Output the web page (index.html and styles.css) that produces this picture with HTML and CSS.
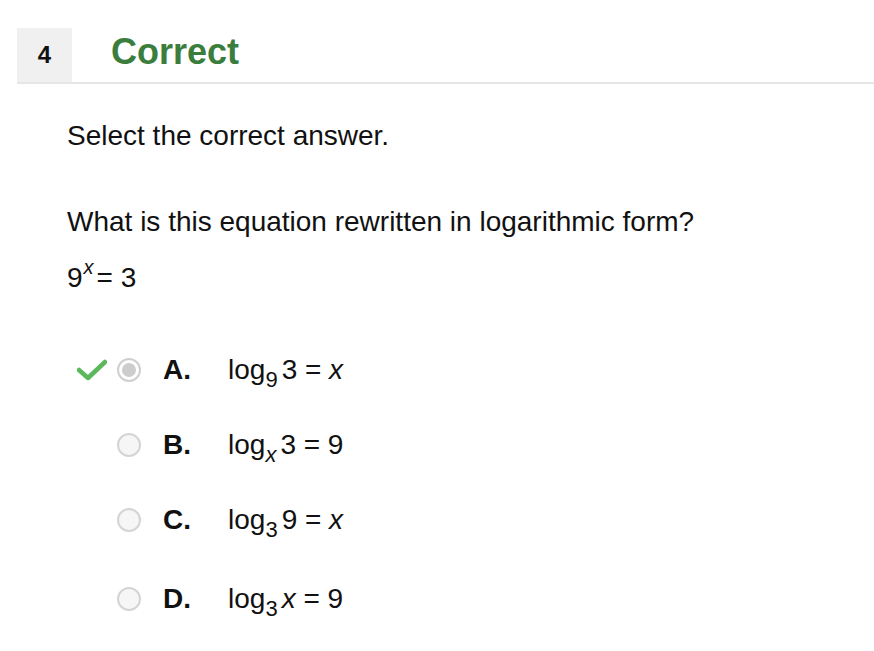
FILE: index.html
```html
<!DOCTYPE html>
<html lang="en">
<head>
<meta charset="utf-8">
<title>Question 4</title>
<link rel="stylesheet" href="styles.css">
</head>
<body>
<div class="header">
  <div class="qnum">4</div>
  <div class="status">Correct</div>
</div>
<div class="content">
  <p class="instr">Select the correct answer.</p>
  <p class="question">What is this equation rewritten in logarithmic form?</p>
  <p class="equation">9<span class="sup">x</span>= 3</p>
  <div class="options">
    <div class="opt">
      <span class="mark"><svg width="30" height="22" viewBox="0 0 30 22"><polyline points="2,11 11,19 28,3" fill="none" stroke="#5cb85c" stroke-width="4.5" stroke-linecap="round" stroke-linejoin="round"/></svg></span>
      <span class="radio checked"><span class="dot"></span></span>
      <span class="letter">A.</span>
      <span class="math">log<span class="sub">9</span>3 = <i>x</i></span>
    </div>
    <div class="opt">
      <span class="mark"></span>
      <span class="radio"></span>
      <span class="letter">B.</span>
      <span class="math">log<span class="sub"><i>x</i></span>3 = 9</span>
    </div>
    <div class="opt">
      <span class="mark"></span>
      <span class="radio"></span>
      <span class="letter">C.</span>
      <span class="math">log<span class="sub">3</span>9 = <i>x</i></span>
    </div>
    <div class="opt opt-last">
      <span class="mark"></span>
      <span class="radio"></span>
      <span class="letter">D.</span>
      <span class="math">log<span class="sub">3</span><i>x</i> = 9</span>
    </div>
  </div>
</div>
</body>
</html>
```
FILE: styles.css
```css
html, body {
  margin: 0;
  padding: 0;
  background: #fff;
}
body {
  font-family: "Liberation Sans", Arial, Helvetica, sans-serif;
  color: #111;
}
.header {
  display: flex;
  margin: 28px 0 0 17px;
  height: 54px;
  border-bottom: 2px solid #e6e6e6;
}
.qnum {
  width: 55px;
  background: #f0f0f0;
  display: flex;
  align-items: center;
  justify-content: center;
  font-weight: bold;
  font-size: 24px;
  color: #111;
}
.status {
  margin-left: 39px;
  font-weight: bold;
  font-size: 36px;
  line-height: 48px;
  color: #3a7d3c;
}
.content {
  padding-left: 67px;
}
.content p {
  margin: 0;
  font-size: 28px;
  line-height: 32px;
}
.instr {
  padding-top: 36px;
}
.question {
  margin-top: 54px !important;
}
.equation {
  margin-top: 24px !important;
}
.sup {
  font-style: italic;
  font-size: 20px;
  line-height: 0;
  position: relative;
  top: -13px;
  margin-left: 1px;
  margin-right: 3px;
}
.options {
  margin-top: 52px;
  display: flex;
  flex-direction: column;
  gap: 27px;
}
.opt {
  display: flex;
  align-items: center;
  height: 48px;
  font-size: 28px;
}
.opt-last {
  margin-top: 4px;
}
.mark {
  width: 30px;
  height: 22px;
  margin-left: 10px;
  margin-right: 10px;
  display: flex;
}
.radio {
  box-sizing: border-box;
  width: 24px;
  height: 24px;
  border-radius: 50%;
  border: 2px solid #d4d4d4;
  background: #f6f6f6;
  display: flex;
  align-items: center;
  justify-content: center;
}
.radio.checked {
  background: #fff;
  border-color: #cfcfcf;
}
.dot {
  width: 14px;
  height: 14px;
  border-radius: 50%;
  background: #cdcdcd;
}
.letter {
  font-weight: bold;
  width: 65px;
  margin-left: 22px;
}
.math {
  white-space: nowrap;
}
.sub {
  font-size: 22px;
  position: relative;
  top: 8px;
  line-height: 0;
  margin-right: 4px;
}
.math i {
  font-style: italic;
}
```
